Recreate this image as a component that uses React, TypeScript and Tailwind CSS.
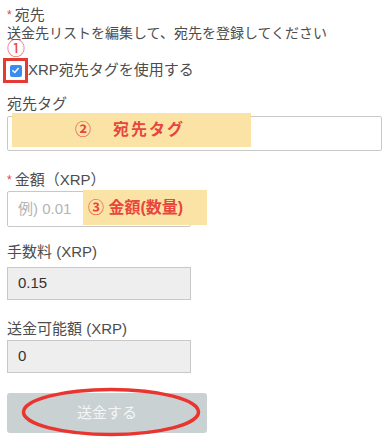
import React from 'react';

const font = { fontFamily: '"Liberation Sans", "Noto Sans CJK JP", sans-serif' };

const App = () => {
  return (
    <div className="w-[389px] h-[440px] bg-white text-[#4d4d4d] relative overflow-hidden" style={font}>
      <div className="px-[7px] pt-[5px]">
        <div className="h-[20px] text-[15px] leading-[20px] flex items-center">
          <span className="text-[#e0433a] text-[12px] mr-[3px]">*</span>
          <span>宛先</span>
        </div>
        <div className="h-[20px] text-[14px] leading-[20px] mt-[-2px]">送金先リストを編集して、宛先を登録してください</div>

        {/* ① annotation + checkbox */}
        <div className="relative h-[51px]">
          <span className="absolute left-[0px] top-[-5px] text-[#e8453c] text-[18px] leading-[22px]">①</span>
          <div className="absolute left-[-4px] top-[15px] w-[25px] h-[25px] border-[3px] border-[#e53935] bg-white flex items-center justify-center">
            <span className="w-[12px] h-[12px] rounded-[2px] bg-[#3b8cf0] flex items-center justify-center">
              <svg width="9" height="9" viewBox="0 0 10 10">
                <path d="M2 5.2 L4.2 7.3 L8 2.8" fill="none" stroke="white" strokeWidth="1.6" strokeLinecap="round" strokeLinejoin="round" />
              </svg>
            </span>
          </div>
          <span className="absolute left-[21px] top-[16px] text-[15px] leading-[22px]">XRP宛先タグを使用する</span>
        </div>

        <div className="h-[20px] text-[15px] leading-[20px]">宛先タグ</div>
        <div className="relative mt-[2px]">
          <div className="h-[35px] w-[375px] border border-[#c8c8c8] rounded-[2px] bg-white" />
          <div className="absolute left-[5px] top-[-3px] w-[239px] h-[34px] bg-[#fbe3a6] flex items-center text-[#e8453c] font-bold text-[16px]">
            <span className="ml-[63px]">②</span>
            <span className="ml-[22px] tracking-[2px]">宛先タグ</span>
          </div>
        </div>

        <div className="h-[20px] text-[15px] leading-[20px] mt-[19px] flex items-center">
          <span className="text-[#e0433a] text-[12px] mr-[3px]">*</span>
          <span>金額（XRP）</span>
        </div>
        <div className="relative mt-[1px]">
          <div className="h-[36px] w-[184px] border border-[#c8c8c8] rounded-[2px] bg-white flex items-center pl-[10px] text-[15px] text-[#b4b4b4]">例) 0.01</div>
          <div className="absolute left-[76px] top-[-1px] w-[124px] h-[35px] bg-[#fbe3a6] flex items-center text-[#e8453c] font-bold text-[16px] pl-[5px]">
            ③ 金額(数量)
          </div>
        </div>

        <div className="h-[20px] text-[15px] leading-[20px] mt-[15px]">手数料 (XRP)</div>
        <div className="h-[33px] w-[184px] mt-[5px] border border-[#c8c8c8] bg-[#eeeeee] flex items-center pl-[10px] text-[15px] text-[#333333]">0.15</div>

        <div className="h-[20px] text-[15px] leading-[20px] mt-[19px]">送金可能額 (XRP)</div>
        <div className="h-[33px] w-[184px] mt-[1px] border border-[#c8c8c8] bg-[#eeeeee] flex items-center pl-[10px] text-[15px] text-[#333333]">0</div>

        <div className="relative mt-[20px]">
          <button className="w-[200px] h-[40px] rounded-[3px] bg-[#cad1d3] text-[#f4f6f6] text-[15px] flex items-center justify-center">送金する</button>
          <svg className="absolute left-[14px] top-[-6px]" width="180" height="50" viewBox="0 0 180 50">
            <ellipse cx="90" cy="25" rx="87.5" ry="22.5" fill="none" stroke="#e8352f" strokeWidth="3.5" />
          </svg>
        </div>
      </div>
    </div>
  );
};

export default App;
